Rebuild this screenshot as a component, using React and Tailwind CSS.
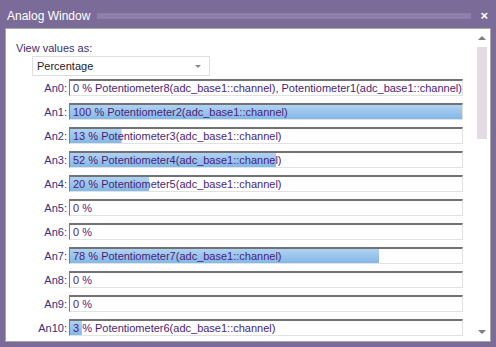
import React from 'react';

const rows = [
  { label: 'An0:', pct: 0, text: '0 % Potentiometer8(adc_base1::channel), Potentiometer1(adc_base1::channel)' },
  { label: 'An1:', pct: 100, text: '100 % Potentiometer2(adc_base1::channel)' },
  { label: 'An2:', pct: 13, text: '13 % Potentiometer3(adc_base1::channel)' },
  { label: 'An3:', pct: 52, text: '52 % Potentiometer4(adc_base1::channel)' },
  { label: 'An4:', pct: 20, text: '20 % Potentiometer5(adc_base1::channel)' },
  { label: 'An5:', pct: 0, text: '0 %' },
  { label: 'An6:', pct: 0, text: '0 %' },
  { label: 'An7:', pct: 78, text: '78 % Potentiometer7(adc_base1::channel)' },
  { label: 'An8:', pct: 0, text: '0 %' },
  { label: 'An9:', pct: 0, text: '0 %' },
  { label: 'An10:', pct: 3, text: '3 % Potentiometer6(adc_base1::channel)' },
];

const App = () => {
  return (
    <div className="w-[496px] h-[347px] bg-[#7b6b99] flex flex-col font-['Liberation_Sans',Arial,sans-serif] text-[11px] leading-[14px] overflow-hidden">
      {/* Title bar */}
      <div className="h-[28px] flex items-center pl-[7px] pr-[8px] pt-[4px]">
        <span className="text-white text-[12px]">Analog Window</span>
        <div className="flex-1 h-[6px] ml-[7px] mr-[9px] bg-[radial-gradient(circle,#a597bd_0.6px,transparent_0.8px)] bg-[length:2px_2px]" />
        <span className="text-white font-bold text-[13px]">×</span>
      </div>

      {/* Panel */}
      <div className="mx-[5px] h-[314px] border border-[#a6a6a6] bg-white flex">
        <div className="flex-1 flex flex-col pl-[10px] pt-[12px]">
          <div className="text-[#3b2e6e]">View values as:</div>
          <div className="ml-[16px] mt-[1px] w-[178px] h-[20px] border border-[#dedede] flex items-center pl-[4px] pr-[8px] text-[#222]">
            <span className="flex-1">Percentage</span>
            <span className="w-0 h-0 border-l-[3px] border-r-[3px] border-t-[3px] border-l-transparent border-r-transparent border-t-[#888]" />
          </div>
          <div className="mt-[3px] -ml-[10px] flex flex-col gap-[7px]">
            {rows.map((r) => (
              <div key={r.label} className="flex items-center h-[17px]">
                <span className="w-[61px] text-right text-[#35307a]">{r.label}</span>
                <div
                  className="ml-[2px] w-[394px] h-[17px] border-t-2 border-l border-r border-b border-t-[#727272] border-l-[#7c7c7c] border-r-[#e2e2e2] border-b-[#e2e2e2] pl-[3px] flex items-center whitespace-nowrap overflow-hidden text-[#4b1e78] bg-no-repeat bg-[linear-gradient(#b0d2f1,#84b8e6)]"
                  style={{ backgroundSize: `${Math.min(100, r.pct * 1.012)}% 100%` }}
                >
                  {r.text}
                </div>
              </div>
            ))}
          </div>
        </div>

        {/* Scrollbar */}
        <div className="w-[16px] flex flex-col items-center pt-[7px] pb-[7px]">
          <span className="w-0 h-0 border-l-[4px] border-r-[4px] border-b-[4px] border-l-transparent border-r-transparent border-b-[#7f7f7f]" />
          <div className="mt-[7px] w-[10px] h-[92px] bg-[#e4dbe4]" />
          <div className="flex-1" />
          <span className="w-0 h-0 border-l-[4px] border-r-[4px] border-t-[4px] border-l-transparent border-r-transparent border-t-[#7f7f7f]" />
        </div>
      </div>
    </div>
  );
};

export default App;
